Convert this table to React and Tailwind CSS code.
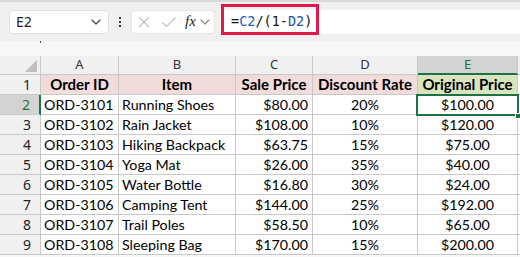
import React from "react";

const rows = [
  ["ORD-3101", "Running Shoes", "$80.00", "20%", "$100.00"],
  ["ORD-3102", "Rain Jacket", "$108.00", "10%", "$120.00"],
  ["ORD-3103", "Hiking Backpack", "$63.75", "15%", "$75.00"],
  ["ORD-3104", "Yoga Mat", "$26.00", "35%", "$40.00"],
  ["ORD-3105", "Water Bottle", "$16.80", "30%", "$24.00"],
  ["ORD-3106", "Camping Tent", "$144.00", "25%", "$192.00"],
  ["ORD-3107", "Trail Poles", "$58.50", "10%", "$65.00"],
  ["ORD-3108", "Sleeping Bag", "$170.00", "15%", "$200.00"],
];

const cellFont = { fontFamily: "Lato, 'Noto Sans', sans-serif" };

function Chevron({ className }) {
  return (
    <svg className={className} width="10" height="6" viewBox="0 0 10 6" fill="none">
      <path d="M1 1l4 4 4-4" stroke="currentColor" strokeWidth="1.2" strokeLinecap="round" strokeLinejoin="round" />
    </svg>
  );
}

export default function App() {
  return (
    <div className="w-[520px] h-[257px] overflow-hidden bg-[#f7f7f7] relative" style={{ fontFamily: "'Noto Sans', sans-serif" }}>
      {/* toolbar */}
      <div className="h-[41px] bg-[#f0f0f0] border-t-2 border-[#dadada] flex items-center pl-[9px] relative">
        <div className="w-[100px] h-[24px] bg-white border border-[#e0e0e0] rounded-[4px] flex items-center justify-between pl-[6px] pr-[7px]">
          <span className="text-[14px] text-[#222]">E2</span>
          <Chevron className="text-[#444]" />
        </div>
        <div className="w-[22px] flex flex-col items-center gap-[2px]">
          <span className="w-[2px] h-[2px] bg-[#333]" />
          <span className="w-[2px] h-[2px] bg-[#333]" />
          <span className="w-[2px] h-[2px] bg-[#333]" />
        </div>
        <div className="w-[84px] h-[24px] bg-white border border-[#e6e6e6] rounded-[4px] flex items-center pl-[5px] pr-[4px]">
          <svg width="14" height="14" viewBox="0 0 14 14" className="text-[#bdbdbd]">
            <path d="M2 2l10 10M12 2L2 12" stroke="currentColor" strokeWidth="1.1" />
          </svg>
          <svg width="16" height="14" viewBox="0 0 16 14" className="ml-[10px] text-[#bdbdbd]">
            <path d="M1.5 7.5l4 4L14.5 2.5" stroke="currentColor" strokeWidth="1.1" fill="none" />
          </svg>
          <span className="ml-[8px] text-[15px] italic text-[#222] leading-none" style={{ fontFamily: "'Liberation Serif', serif" }}>fx</span>
          <Chevron className="ml-[4px] text-[#888]" />
        </div>
        <div className="ml-[5px] flex-1 h-[24px] bg-white relative">
          <div className="absolute left-[1px] top-[-6px] w-[98px] h-[31px] border-[3px] border-[#e3194c] flex items-center pl-[7px] pt-[5px]">
            <span className="text-[13.5px] text-[#111] whitespace-nowrap" style={{ fontFamily: "'DejaVu Sans Mono', monospace" }}>
              =<span className="text-[#1f5fbf]">C2</span>/(1-<span className="text-[#1f4f9f]">D2</span>)
            </span>
          </div>
        </div>
      </div>

      {/* spacer */}
      <div className="h-[15px] relative">
        <div className="absolute left-[40px] top-0 w-px h-[2px] bg-[#555]" />
      </div>

      {/* grid */}
      <div className="relative text-[14.25px] text-black" style={cellFont}>
        {/* column header */}
        <div className="flex h-[19px] bg-[#f0f0f0] text-[#333]" style={{ fontFamily: "'Noto Sans', sans-serif" }}>
          <div className="w-[41px] shrink-0 border-r border-b border-[#c8c8c8] relative">
            <svg className="absolute left-[25px] top-[4px]" width="12" height="12" viewBox="0 0 12 12">
              <path d="M12 0V12H0Z" fill="#bfbfbf" />
            </svg>
          </div>
          {[["A", 78], ["B", 117], ["C", 77], ["D", 105]].map(([l, w]) => (
            <div key={l} className="shrink-0 border-r border-b border-[#c8c8c8] flex items-center justify-center text-[13px]" style={{ width: w }}>
              {l}
            </div>
          ))}
          <div className="w-[100px] shrink-0 border-r border-[#c8c8c8] border-b-2 border-b-[#1e7145] bg-[#d3d3d3] flex items-center justify-center text-[13px] text-[#1e7145]">
            E
          </div>
          <div className="flex-1 border-b border-[#c8c8c8]" />
        </div>

        {/* header data row */}
        <div className="flex h-[20px] text-[15px]">
          <div className="w-[41px] shrink-0 bg-[#f0f0f0] border-r border-b border-[#c8c8c8] flex items-center justify-end pr-[9px] text-[14px] text-[#222]" style={{ fontFamily: "'Noto Sans', sans-serif" }}>1</div>
          {[["Order ID", 78], ["Item", 117], ["Sale Price", 77], ["Discount Rate", 105]].map(([t, w]) => (
            <div key={t} className="shrink-0 bg-[#f2dcdb] border-r border-b border-[#c8c8c8] flex items-center justify-center font-bold whitespace-nowrap" style={{ width: w }}>
              {t}
            </div>
          ))}
          <div className="w-[100px] shrink-0 bg-[#d8e4bc] border-r border-b border-[#c8c8c8] flex items-center justify-center font-bold whitespace-nowrap">Original Price</div>
          <div className="flex-1 bg-white border-b border-[#c8c8c8]" />
        </div>

        {rows.map((r, i) => {
          const sel = i === 0;
          return (
            <div key={i} className="flex h-[20px]">
              <div
                className={
                  "w-[41px] shrink-0 border-b border-[#c8c8c8] flex items-center justify-end pr-[9px] text-[14px] " +
                  (sel ? "bg-[#d3d3d3] text-[#1e7145] border-r-2 border-r-[#1e7145]" : "bg-[#f0f0f0] text-[#222] border-r")
                }
                style={{ fontFamily: "'Noto Sans', sans-serif" }}
              >
                {i + 2}
              </div>
              <div className="w-[78px] shrink-0 bg-white border-r border-b border-[#c8c8c8] flex items-center pl-[3px] whitespace-nowrap">{r[0]}</div>
              <div className="w-[117px] shrink-0 bg-white border-r border-b border-[#c8c8c8] flex items-center pl-[3px] whitespace-nowrap">{r[1]}</div>
              <div className="w-[77px] shrink-0 bg-white border-r border-b border-[#c8c8c8] flex items-center justify-end pr-[4px] whitespace-nowrap">{r[2]}</div>
              <div className="w-[105px] shrink-0 bg-white border-r border-b border-[#c8c8c8] flex items-center justify-center whitespace-nowrap">{r[3]}</div>
              <div className="w-[100px] shrink-0 bg-white border-r border-b border-[#c8c8c8] flex items-center justify-center whitespace-nowrap">{r[4]}</div>
              <div className="flex-1 bg-white border-b border-[#c8c8c8]" />
            </div>
          );
        })}

        {/* selection overlay on E2 */}
        <div className="absolute left-[416px] top-[38px] w-[103px] h-[22px] border-2 border-[#1e7145] pointer-events-none" />
        <div className="absolute left-[515px] top-[57px] w-[6px] h-[6px] bg-[#1e7145] border border-white pointer-events-none" />
      </div>
    </div>
  );
}
